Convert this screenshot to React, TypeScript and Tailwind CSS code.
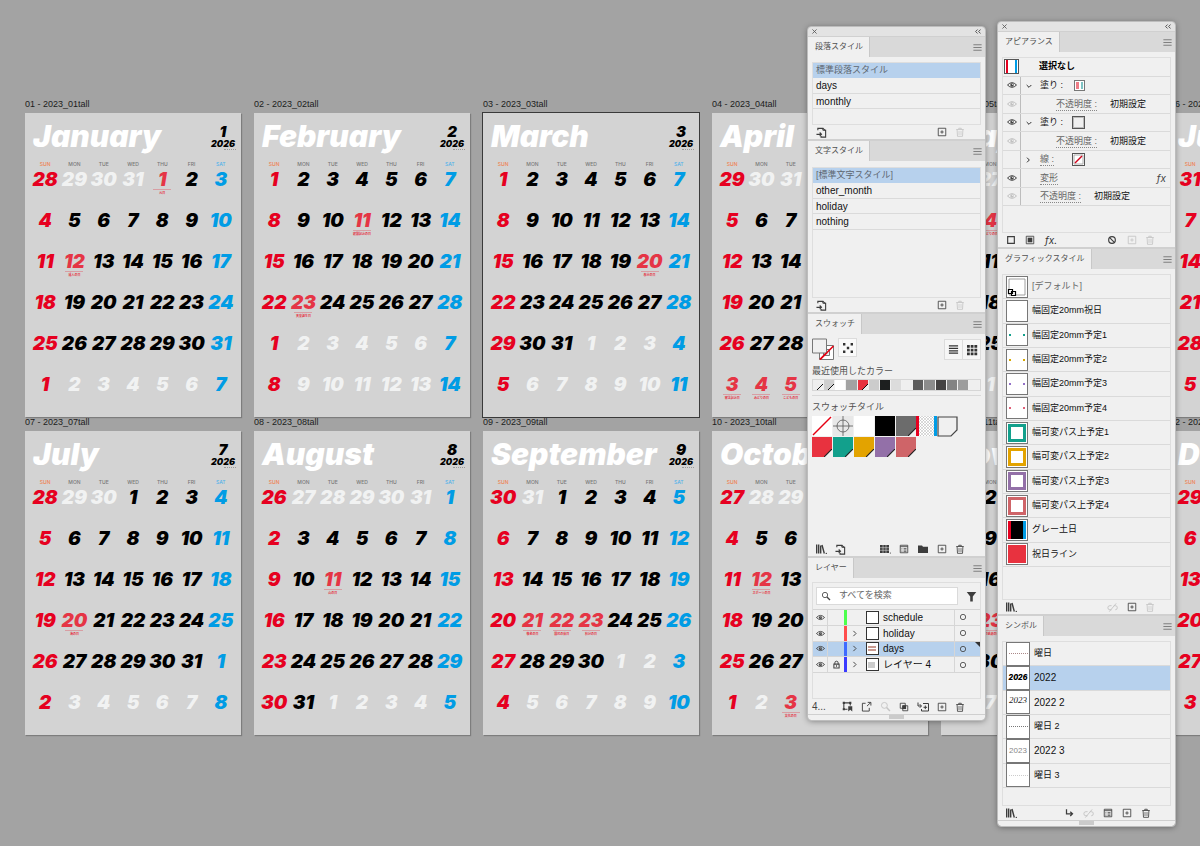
import React, { useState } from 'react';
import clsx from 'clsx';

type Month = {
  no: number;
  name: string;
  lead: number; // day number printed in the first cell
  prevLast: number; // last day of the previous month, 0 when the month starts on Sunday
  days: number;
  holidays: Record<number, string>; // keyed by cell index
};

const MONTHS: Month[] = [
  { no: 1, name: 'January', lead: 28, prevLast: 31, days: 31, holidays: { 4: '元日', 15: '成人の日' } },
  { no: 2, name: 'February', lead: 1, prevLast: 0, days: 28, holidays: { 10: '建国記念の日', 22: '天皇誕生日' } },
  { no: 3, name: 'March', lead: 1, prevLast: 0, days: 31, holidays: { 19: '春分の日' } },
  { no: 4, name: 'April', lead: 29, prevLast: 31, days: 30, holidays: { 31: '昭和の日', 35: '憲法記念日', 36: 'みどりの日', 37: 'こどもの日' } },
  { no: 5, name: 'May', lead: 26, prevLast: 30, days: 31, holidays: { 7: '憲法記念日', 8: 'みどりの日', 9: 'こどもの日', 10: '振替休日' } },
  { no: 6, name: 'June', lead: 31, prevLast: 31, days: 30, holidays: {} },
  { no: 7, name: 'July', lead: 28, prevLast: 30, days: 31, holidays: { 22: '海の日' } },
  { no: 8, name: 'August', lead: 26, prevLast: 31, days: 31, holidays: { 16: '山の日' } },
  { no: 9, name: 'September', lead: 30, prevLast: 31, days: 30, holidays: { 22: '敬老の日', 23: '国民の休日', 24: '秋分の日' } },
  { no: 10, name: 'October', lead: 27, prevLast: 30, days: 31, holidays: { 15: 'スポーツの日', 37: '文化の日' } },
  { no: 11, name: 'November', lead: 1, prevLast: 0, days: 30, holidays: { 2: '文化の日', 22: '勤労感謝の日' } },
  { no: 12, name: 'December', lead: 29, prevLast: 30, days: 31, holidays: {} },
];

const WEEKDAYS = ['SUN', 'MON', 'TUE', 'WED', 'THU', 'FRI', 'SAT'];

const buildCells = (m: Month) => {
  const before = m.prevLast ? m.prevLast - m.lead + 1 : 0;
  return Array.from({ length: 42 }, (_, i) => {
    if (i < before) return { day: m.lead + i, other: true };
    const day = i - before + 1;
    if (day <= m.days) return { day, other: false };
    return { day: day - m.days, other: true };
  });
};

const dayColor = (i: number, other: boolean, holiday: boolean) => {
  if (i % 7 === 0 && !holiday) return 'text-[#e60020]';
  if (i % 7 === 6) return 'text-[#009ce5]';
  if (holiday) return 'text-[#e53545]';
  if (other) return 'text-[#f1f2f2]';
  return 'text-black';
};

const Sheet = ({ month }: { month: Month }) => {
  const id = String(month.no).padStart(2, '0');
  return (
    <section className="flex flex-col">
      <p className="h-[14px] text-[9px] leading-[10px] text-[#1c1c1c] whitespace-nowrap">{`${id} - 2023_${id}tall`}</p>
      <div
        className={clsx(
          'h-[304px] bg-[#d3d3d3] flex flex-col font-[Inter,sans-serif] italic overflow-hidden',
          month.no === 3 ? 'outline outline-[#3a3a3a]' : 'shadow-[1px_1px_1px_#7d7d7d]'
        )}
      >
        <div className="flex justify-between h-[47px] pl-2 pr-[5px]">
          <h2 className="pt-1 text-[30px] leading-[38px] font-black text-white">{month.name}</h2>
          <div className="flex flex-col items-center w-[26px] pt-[11px] font-black text-black">
            <span className="text-[15px] leading-[15px]">{month.no}</span>
            <span className="text-[9px] leading-[10px]">2026</span>
            <span className="w-[12px] self-end border-t border-dotted border-[#999] h-0" />
          </div>
        </div>
        <table className="mx-auto w-[205px] table-fixed border-collapse text-center">
          <thead>
            <tr className="h-[10px]">
              {WEEKDAYS.map((w, i) => (
                <th
                  key={w}
                  className={clsx(
                    'p-0 align-top text-[5px] leading-[8px] font-medium not-italic',
                    i === 0 ? 'text-[#f08050]' : i === 6 ? 'text-[#4fb2ea]' : 'text-[#777]'
                  )}
                >
                  {w}
                </th>
              ))}
            </tr>
          </thead>
          <tbody>
            {[0, 1, 2, 3, 4, 5].map(week => (
              <tr key={week} className="h-[41px]">
                {buildCells(month).slice(week * 7, week * 7 + 7).map((c, col) => {
                  const i = week * 7 + col;
                  const holiday = month.holidays[i];
                  return (
                    <td key={col} className={clsx('p-0 align-top', dayColor(i, c.other, !!holiday))}>
                      <div className="h-[19px] text-[19px] leading-[20px] font-black">{c.day}</div>
                      {holiday && (
                        <div className="mx-auto w-[18px] border-t border-[#e5354555] text-[3px] leading-[6px] not-italic font-bold whitespace-nowrap font-['Noto_Sans_CJK_JP',sans-serif]">
                          {holiday}
                        </div>
                      )}
                    </td>
                  );
                })}
              </tr>
            ))}
          </tbody>
        </table>
      </div>
    </section>
  );
};

/* ---------- icons ---------- */

const ICONS: Record<string, React.ReactNode> = {
  menu: <path d="M1.5 3h9M1.5 6h9M1.5 9h9" stroke="#777" />,
  plus: <path d="M1.5 1.5h9v9h-9zM6 4v4M4 6h4" />,
  trash: (
    <>
      <path d="M1.5 3h9M4.5 3V1.5h3V3M2.5 3.2l.5 8h6l.5-8" />
      <path d="M4.8 4.8v4.8M7.2 4.8v4.8" strokeWidth={0.8} />
    </>
  ),
  load: (
    <>
      <path d="M2 3.5V1.5h5.5v2M7.5 3.5h3v7.5H5.5V9.8" strokeWidth={1.2} />
      <path d="M7.5 1.5l3 2.5M.5 8h5.2M4 6l2 2-2 2" strokeWidth={1.2} />
    </>
  ),
  library: (
    <>
      <path d="M1.7 1.5v9M3.7 1.5v9M5.7 2.5v8M7 2l2.3 8.5" strokeWidth={1.4} />
      <circle cx="11.3" cy="10.4" r=".7" fill="currentColor" stroke="none" />
    </>
  ),
  kinds: (
    <>
      <rect x="1" y="2" width="9" height="8" fill="currentColor" stroke="none" />
      <path d="M1 4.7h9M1 7.3h9M4 2v8M7 2v8" stroke="#f0f0f0" strokeWidth={0.5} />
      <circle cx="11.4" cy="10" r=".6" fill="currentColor" stroke="none" />
    </>
  ),
  options: (
    <>
      <path d="M1.5 1.5h9v9h-9zM1.5 3.2h9" />
      <path d="M3 5.5h1M3 7.2h1M3 8.9h1M5.5 5.5H9M5.5 7.2H9M5.5 8.9H9" strokeWidth={0.9} />
    </>
  ),
  folder: <path d="M1 2.5h4l1 1.2h5V10H1z" fill="currentColor" stroke="none" />,
  unlink: <path d="M5 8.5H3.2a2 2 0 010-4.5H5M7.5 4H9a2 2 0 010 4.5M2.5 10.5l7.5-9" />,
  place: <path d="M3 1.5V7h7M7.5 4.5L10.2 7 7.5 9.5" strokeWidth={1.5} />,
  square: <path d="M2 2h8v8H2z" strokeWidth={1.4} />,
  filled: (
    <>
      <path d="M1.5 1.5h9v9h-9z" />
      <path d="M3.2 3.2h5.6v5.6H3.2z" fill="currentColor" stroke="none" />
    </>
  ),
  ban: (
    <>
      <circle cx="6" cy="6" r="4" strokeWidth={1.4} />
      <path d="M3.2 3.2l5.6 5.6" strokeWidth={1.4} />
    </>
  ),
  search: (
    <>
      <circle cx="4.8" cy="4.8" r="3.2" />
      <path d="M7.2 7.2l3.6 3.6" strokeWidth={1.6} />
    </>
  ),
  funnel: <path d="M.8 1h10.4L7.4 6v5.5H4.6V6z" fill="currentColor" stroke="none" />,
  collect: (
    <>
      <path d="M2 2h7M2 2v7h4M9 2v3" strokeWidth={1.2} />
      <path d="M.8.8h2.4v2.4H.8zM7.8.8h2.4v2.4H7.8zM.8 7.8h2.4v2.4H.8z" fill="currentColor" stroke="none" />
      <path d="M6.8 11.5V5.8h4.4v5.7L9 9.6z" fill="currentColor" stroke="none" />
    </>
  ),
  exportIcon: <path d="M5 2.5H1.5v8.5H9V7.5M7.3 1.5h3.5V5M10.5 1.8L6.5 5.6" />,
  mask: (
    <>
      <path d="M1.5 1.5h6v6h-6zM4.5 4.5h6v6h-6z" />
      <path d="M4 4h4.5v4.5H4z" fill="currentColor" stroke="none" />
    </>
  ),
  sublayer: <path d="M1 1.5V5h3M2.8 3.2L4.5 5 2.8 6.8M6 2.5h5.5v7.5H4.5V8M8.3 4.5v3.6M6.5 6.3h3.6" />,
  eye: (
    <>
      <path d="M.6 6Q6 .4 11.4 6 6 11.6.6 6z" strokeWidth={1.2} />
      <circle cx="6" cy="6" r="2.1" fill="currentColor" stroke="none" />
      <circle cx="6.5" cy="5.4" r=".7" fill="#f0f0f0" stroke="none" />
    </>
  ),
  lock: (
    <>
      <path d="M3.8 5.5V3.8a2.2 2.2 0 014.4 0v1.7" strokeWidth={1.3} />
      <path d="M2.5 5.5h7v5.2h-7zM6 7v2" strokeWidth={1.4} />
    </>
  ),
  right: <path d="M4.5 2.5L8 6 4.5 9.5" strokeWidth={1.3} />,
  down: <path d="M2.5 4.5L6 8l3.5-3.5" strokeWidth={1.3} />,
  circle: <circle cx="6" cy="6" r="3.2" />,
  random: (
    <path d="M1 1h2.4v2.4H1zM8.6 1H11v2.4H8.6zM4.8 4.8h2.4v2.4H4.8zM1 8.6h2.4V11H1zM8.6 8.6H11V11H8.6z" fill="currentColor" stroke="none" />
  ),
  listView: <path d="M1 2h10M1 4.7h10M1 7.4h10M1 10h10" strokeWidth={1.3} />,
  gridView: (
    <path d="M1 1h2.8v2.8H1zM4.7 1h2.8v2.8H4.7zM8.4 1h2.8v2.8H8.4zM1 4.7h2.8v2.8H1zM4.7 4.7h2.8v2.8H4.7zM8.4 4.7h2.8v2.8H8.4zM1 8.4h2.8v2.8H1zM4.7 8.4h2.8v2.8H4.7zM8.4 8.4h2.8v2.8H8.4z" fill="currentColor" stroke="none" />
  ),
};

const Icon = ({ name, className }: { name: string; className?: string }) => (
  <svg viewBox="0 0 12 12" fill="none" stroke="currentColor" strokeWidth={1} className={clsx('shrink-0', className || 'size-[10px]')} aria-hidden="true">
    {ICONS[name]}
  </svg>
);

const IconButton = ({ name, label, dim, className }: { name: string; label: string; dim?: boolean; className?: string }) => (
  <button aria-label={label} disabled={dim} className={clsx('flex items-center justify-center shrink-0', dim ? 'text-[#c4c4c4]' : 'text-[#3d3d3d]')}>
    <Icon name={name} className={className} />
  </button>
);

/* ---------- panel chrome ---------- */

const FloatingWindow = ({ className, children }: { className: string; children: React.ReactNode }) => (
  <div className={clsx('absolute w-[177px] rounded-[3px] bg-[#f0f0f0] outline outline-[#bdbdbd] shadow-[0_1px_6px_rgba(0,0,0,0.45)]', className)}>
    <div className="flex items-center justify-between h-[10px] px-1 bg-[#e3e3e3] rounded-t-[3px] border-b border-[#d0d0d0]">
      <button aria-label="閉じる" className="text-[#555]">
        <svg viewBox="0 0 6 6" className="size-[5px]" stroke="currentColor" strokeWidth={1}><path d="M.5.5l5 5M5.5.5l-5 5" /></svg>
      </button>
      <button aria-label="折りたたむ" className="text-[#444]">
        <svg viewBox="0 0 6 5" className="w-[6px] h-[5px]" fill="none" stroke="currentColor" strokeWidth={0.9}><path d="M2.6.5l-2 2 2 2M5.6.5l-2 2 2 2" /></svg>
      </button>
    </div>
    {children}
  </div>
);

const Panel = ({ title, children, last }: { title: string; children: React.ReactNode; last?: boolean }) => (
  <section className={clsx(!last && 'border-b-2 border-[#d0d0d0]')}>
    <div className="flex items-center justify-between h-[20px] bg-[#d9d9d9] pr-[2px]">
      <button className="h-full pl-[7px] pr-[6px] bg-[#f0f0f0] border-r border-[#c8c8c8] text-[8px] leading-[20px] text-[#505050] whitespace-nowrap">{title}</button>
      <button aria-label={`${title}メニュー`}><Icon name="menu" className="size-[11px]" /></button>
    </div>
    <div className="px-1">{children}</div>
  </section>
);

const Grip = () => (
  <div className="flex justify-center h-[6px] border-t border-[#cfcfcf]">
    <span className="w-[15px] h-[4px] bg-[#cbcbcb]" />
  </div>
);

const StyleList = ({ items, className }: { items: string[]; className: string }) => {
  const [selected, setSelected] = useState(items[0]);
  return (
    <ul className={clsx('border border-[#dedede]', className)}>
      {items.map((item, i) => (
        <li key={item}>
          <button
            onClick={() => setSelected(item)}
            className={clsx(
              'flex items-center w-full px-[3px] border-b text-left',
              selected === item ? 'bg-[#b7d1ed] border-[#b7d1ed]' : 'border-[#dadada]',
              i % 2 === 0 ? 'h-[15px]' : 'h-[16px]',
              i === 0 ? 'pt-[2px] text-[9px] text-[#5d6670]' : 'text-[10px] text-[#111]'
            )}
          >
            {item}
          </button>
        </li>
      ))}
    </ul>
  );
};

const StyleFooter = () => (
  <div className="flex items-center h-[14px] pl-1 pr-4">
    <IconButton name="load" label="読み込み" className="size-[11px]" />
    <div className="flex gap-2 ml-auto">
      <IconButton name="plus" label="新規" />
      <IconButton name="trash" label="削除" dim />
    </div>
  </div>
);

/* ---------- swatches ---------- */

const RECENT = [
  'bg-[#eeeeee]', 'bg-[#cfcfcf]', 'bg-white', 'bg-[#a3a3a3]', 'bg-[#e8323f]', 'bg-[#cccccc]', 'bg-[#1d1f1f]', 'bg-[#dcdcdc]',
  'bg-[#efefef]', 'bg-[#5d5d5d]', 'bg-[#8c8c8c]', 'bg-[#444242]', 'bg-[#838383]', 'bg-[#9c9c9c]', 'bg-[#efefef]',
];

const Corner = () => (
  <svg viewBox="0 0 8 8" className="size-[8px]"><path d="M0 8L8 0V8z" fill="#f0f0f0" /><path d="M0 8L8 0" stroke="#222" strokeWidth={1.2} /></svg>
);

const SPOT_TILES = ['bg-[#e8323f]', 'bg-[#12a08c]', 'bg-[#e3a300]', 'bg-[#9370a8]', 'bg-[#cf6468]'];

const Swatches = () => (
  <div className="h-[208px] pt-1">
    <div className="flex items-center h-[23px]">
      <svg viewBox="0 0 23 23" className="size-[23px]" aria-hidden="true">
        <path d="M7.5 7.5h14v14h-14z" fill="#fff" stroke="#777" />
        <path d="M11.5 11.5h6v6h-6z" fill="#f0f0f0" stroke="#777" />
        <path d="M8 21.5L21.5 8" stroke="#e60012" strokeWidth={1.6} />
        <path d="M.5 1h14v14H.5z" fill="#f0f0f0" stroke="#777" />
        <path d="M8 21.5L15 14.5" stroke="#e60012" strokeWidth={1.6} />
      </svg>
      <button aria-label="カラーテーマ" className="flex items-center justify-center ml-[3px] size-[19px] mb-1 bg-[#fafafa] border border-[#dcdcdc] text-[#333]"><Icon name="random" className="size-[12px]" /></button>
      <div className="flex ml-auto bg-[#f6f6f6] border border-[#dcdcdc] text-[#333]">
        <button aria-label="リスト表示" className="flex items-center justify-center w-[18px] h-[19px] border-r border-[#dcdcdc]"><Icon name="listView" className="size-[11px]" /></button>
        <button aria-label="サムネール表示" className="flex items-center justify-center w-[17px] h-[19px]"><Icon name="gridView" className="size-[12px]" /></button>
      </div>
    </div>
    <h3 className="pt-1 text-[9px] leading-[13px] text-[#505050]">最近使用したカラー</h3>
    <div className="flex mt-[1px] h-[12px] border border-[#d6d6d6]">
      {RECENT.map((color, i) => (
        <button key={i} aria-label={`最近 ${i + 1}`} className={clsx('flex items-end justify-end flex-1 h-full border-r border-[#f0f0f0]', color)}>
          {(i < 2 || i === 4) && <svg viewBox="0 0 6 6" className="size-[6px]"><path d="M0 6L6 0V6z" fill="#f0f0f0" /><path d="M0 6L6 0" stroke="#111" /></svg>}
        </button>
      ))}
    </div>
    <h3 className="mt-1 border-t border-[#d9d9d9] pt-[5px] text-[9px] leading-[13px] text-[#505050]">スウォッチタイル</h3>
    <div className="flex mt-[2px] h-[21px]">
      <button aria-label="なし" className="size-[20px] mr-[1px] bg-white"><svg viewBox="0 0 20 20"><path d="M1 19L19 1" stroke="#e60012" strokeWidth={1.4} /></svg></button>
      <button aria-label="レジストレーション" className="size-[20px] mr-[1px] bg-[#e8e8e8]"><svg viewBox="0 0 20 20" fill="none" stroke="#555" strokeWidth={0.8}><circle cx="10" cy="10" r="6" /><path d="M10 0v20M0 10h20" /></svg></button>
      <button aria-label="ホワイト" className="size-[20px] mr-[1px] bg-white" />
      <button aria-label="ブラック" className="size-[20px] mr-[1px] bg-black" />
      <button aria-label="グレー" className="flex items-end justify-end size-[20px] bg-[#6c6c6c]"><Corner /></button>
      <button aria-label="パターン" className="w-[21px] h-[20px] border-l-3 border-r-3 border-l-[#e60020] border-r-[#009ce5]">
        <svg viewBox="0 0 15 20" className="w-full h-full">
          <defs><pattern id="weave" width="3" height="3" patternUnits="userSpaceOnUse"><rect width="3" height="3" fill="#fff" /><path d="M0 0l3 3M3 0L0 3" stroke="#b5b5b5" strokeWidth=".5" /></pattern></defs>
          <rect width="15" height="20" fill="url(#weave)" />
        </svg>
      </button>
      <button aria-label="薄いグレー" className="size-[21px]"><svg viewBox="0 0 21 21"><path d="M1 1h19v13l-6 6H1z" fill="#f0f0f0" stroke="#444" strokeWidth={1.2} /></svg></button>
    </div>
    <div className="flex gap-[1px]">
      {SPOT_TILES.map((color, i) => (
        <button key={color} aria-label={`スポット ${i + 1}`} className={clsx('flex items-end justify-end size-[20px]', color)}><Corner /></button>
      ))}
    </div>
  </div>
);

/* ---------- layers ---------- */

const LAYERS = [
  { name: 'schedule', color: 'bg-[#4dff4d]', locked: false, open: false },
  { name: 'holiday', color: 'bg-[#ff4d4d]', locked: false, open: true },
  { name: 'days', color: 'bg-[#3f6bff]', locked: false, open: true },
  { name: 'レイヤー 4', color: 'bg-[#3a3aff]', locked: true, open: true },
];

const Layers = () => {
  const [query, setQuery] = useState('');
  const [active, setActive] = useState('days');
  return (
    <>
      <div className="mt-1 h-[117px] border border-[#dedede]">
        <div className="flex items-center gap-2 h-[26px] pl-[3px] pr-[3px]">
          <label className="flex items-center gap-[8px] flex-1 min-w-0 h-[18px] pl-1 bg-white border border-[#dadada] text-[#444]">
            <Icon name="search" />
            <input
              value={query}
              onChange={e => setQuery(e.target.value)}
              placeholder="すべてを検索"
              aria-label="すべてを検索"
              className="w-full min-w-0 text-[9px] outline-none placeholder:text-[#666]"
            />
          </label>
          <IconButton name="funnel" label="フィルター" className="size-[11px]" />
        </div>
        <ul className="border-t border-[#d4d4d4] h-[64px] grid auto-rows-fr">
          {LAYERS.map(layer => (
            <li key={layer.name} className={clsx('flex items-stretch border-b border-[#d6d6d6] text-[#444]', active === layer.name && 'bg-[#b7d1ed]')}>
              <button aria-label={`${layer.name} 表示`} className="flex items-center justify-center w-[15px] border-r border-[#d6d6d6]"><Icon name="eye" className="size-[9px]" /></button>
              <button aria-label={`${layer.name} ロック`} className="flex items-center justify-center w-[16px]">{layer.locked && <Icon name="lock" className="size-[9px]" />}</button>
              <span className={clsx('w-[3px]', layer.color)} />
              <button aria-label={`${layer.name} 展開`} className="flex items-center justify-center w-[14px]">{layer.open && <Icon name="right" className="size-[9px]" />}</button>
              <button onClick={() => setActive(layer.name)} className="flex items-center gap-1 flex-1 pl-[5px] text-[10px] text-[#111]">
                <span className="flex items-center size-[13px] bg-white border border-[#333] p-[1px]">
                  {layer.name === 'days' && <span className="w-2 h-[5px] border-y-2 border-[#c99a90]" />}
                  {layer.name === 'レイヤー 4' && <span className="w-[7px] h-[6px] bg-[#cccccc]" />}
                </span>
                {layer.name}
              </button>
              <button aria-label={`${layer.name} ターゲット`} className="flex items-center w-[26px] pl-[3px] border-l border-[#d6d6d6]">
                <Icon name="circle" />
                {active === layer.name && <svg viewBox="0 0 5 5" className="size-[5px] ml-auto self-start"><path d="M0 0h5v5z" fill="#333" /></svg>}
              </button>
            </li>
          ))}
        </ul>
      </div>
      <div className="flex items-center h-[15px] pr-4">
        <span className="text-[10px] text-[#444]">4...</span>
        <div className="flex gap-[8px] ml-auto">
          <IconButton name="collect" label="書き出し用に追加" className="size-[11px]" />
          <IconButton name="exportIcon" label="書き出し" className="size-[11px]" />
          <IconButton name="search" label="検索" dim className="size-[11px]" />
          <IconButton name="mask" label="マスク" />
          <IconButton name="sublayer" label="サブレイヤー" className="size-[12px]" />
          <IconButton name="plus" label="新規レイヤー" />
          <IconButton name="trash" label="レイヤーを削除" />
        </div>
      </div>
    </>
  );
};

/* ---------- appearance ---------- */

const AppearanceRow = ({ eye, children }: { eye: 'on' | 'off' | 'none'; children: React.ReactNode }) => (
  <div className="flex items-stretch border-b border-[#dadada] text-[9px] text-[#111]">
    <button aria-label="表示" className={clsx('flex items-center justify-center w-[18px] border-r border-[#bdbdbd]', eye === 'on' ? 'text-[#444]' : 'text-[#c0c0c0]')}>
      {eye !== 'none' && <Icon name="eye" />}
    </button>
    <div className="flex items-center flex-1 pt-[1px]">{children}</div>
  </div>
);

const OptionLink = ({ children }: { children: React.ReactNode }) => (
  <button className="text-[#666] leading-[12px] border-b border-dotted border-[#888]">{children}</button>
);

const Appearance = () => (
  <>
    <div className="mt-[5px] h-[176px] border border-[#dedede]">
      <div className="h-[148px] grid auto-rows-fr">
        <div className="flex items-center border-b border-[#dadada] text-[9px] font-bold text-black">
          <span className="flex justify-between w-[15px] h-[15px] ml-[1px] mr-[20px] px-[1px] bg-white border border-[#555]">
            <span className="w-[2px] bg-[#e60020]" /><span className="w-[2px] bg-[#009ce5]" />
          </span>
          選択なし
        </div>
        <AppearanceRow eye="on">
          <Icon name="down" className="size-[8px] ml-1 mr-[7px]" /><button>塗り :</button>
          <span className="flex justify-between size-[11px] ml-[11px] p-[1px] bg-white border border-[#777]"><span className="w-[3px] bg-[#ee7c86]" /><span className="w-[2px] bg-[#7fc4c4]" /></span>
        </AppearanceRow>
        <AppearanceRow eye="off">
          <span className="ml-[35px]"><OptionLink>不透明度 :</OptionLink></span><span className="ml-[13px]">初期設定</span>
        </AppearanceRow>
        <AppearanceRow eye="on">
          <Icon name="down" className="size-[8px] ml-1 mr-[7px]" /><button>塗り :</button>
          <span className="size-[13px] ml-[9px] bg-[#f0f0f0] border border-[#555] outline outline-[#bbb] -outline-offset-2" />
        </AppearanceRow>
        <AppearanceRow eye="off">
          <span className="ml-[35px]"><OptionLink>不透明度 :</OptionLink></span><span className="ml-[13px]">初期設定</span>
        </AppearanceRow>
        <AppearanceRow eye="none">
          <Icon name="right" className="size-[8px] ml-[3px] mr-2" /><OptionLink>線 :</OptionLink>
          <span className="size-[13px] ml-[18px] bg-white border border-[#555]"><svg viewBox="0 0 11 11"><path d="M1 1h9v9H1z" fill="none" stroke="#999" strokeWidth={0.8} /><path d="M2 9L9 2" stroke="#d0021b" strokeWidth={1.5} /></svg></span>
        </AppearanceRow>
        <AppearanceRow eye="on">
          <span className="ml-[19px]"><OptionLink>変形</OptionLink></span>
          <button className="ml-auto mr-1 font-[Inter,sans-serif] italic text-[10px] text-[#444]">fx</button>
        </AppearanceRow>
        <AppearanceRow eye="off">
          <span className="ml-[19px]"><OptionLink>不透明度 :</OptionLink></span><span className="ml-[13px]">初期設定</span>
        </AppearanceRow>
      </div>
    </div>
    <div className="flex items-center h-[14px] pl-1 pr-4">
      <IconButton name="square" label="新規線" />
      <span className="ml-[9px] flex"><IconButton name="filled" label="新規塗り" /></span>
      <button className="ml-[10px] font-[Inter,sans-serif] italic text-[10px] text-[#333]">fx.</button>
      <div className="flex gap-2 ml-auto">
        <span className="flex mr-[2px]"><IconButton name="ban" label="消去" /></span>
        <IconButton name="plus" label="複製" dim />
        <IconButton name="trash" label="削除" dim />
      </div>
    </div>
  </>
);

/* ---------- graphic styles / symbols ---------- */

const Dots = ({ color }: { color: string }) => (
  <span className="flex items-center justify-between w-full px-[2px]"><span className={clsx('size-[2px]', color)} /><span className={clsx('size-[2px]', color)} /></span>
);
const Frame = ({ color }: { color: string }) => <span className={clsx('size-[18px] border-[3px] bg-white', color)} />;

const GRAPHIC_STYLES: { name: string; thumb: React.ReactNode }[] = [
  {
    name: '[デフォルト]',
    thumb: (
      <svg viewBox="0 0 20 20" className="size-[20px]" fill="none" stroke="#888" strokeWidth={0.8}>
        <path d="M2 2h16v16H2z" />
        <path d="M4.5 14.5h4v4h-4zM1.5 12.5h4v4h-4z" fill="#fff" stroke="#000" strokeWidth={1.2} />
      </svg>
    ),
  },
  { name: '幅固定20mm祝日', thumb: null },
  { name: '幅固定20mm予定1', thumb: <Dots color="bg-[#12a08c]" /> },
  { name: '幅固定20mm予定2', thumb: <Dots color="bg-[#d8a800]" /> },
  { name: '幅固定20mm予定3', thumb: <Dots color="bg-[#9370c8]" /> },
  { name: '幅固定20mm予定4', thumb: <Dots color="bg-[#e06078]" /> },
  { name: '幅可変パス上予定1', thumb: <Frame color="border-[#12a08c]" /> },
  { name: '幅可変パス上予定2', thumb: <Frame color="border-[#e3a300]" /> },
  { name: '幅可変パス上予定3', thumb: <Frame color="border-[#9370a8]" /> },
  { name: '幅可変パス上予定4', thumb: <Frame color="border-[#cf6468]" /> },
  { name: 'グレー土日', thumb: <span className="size-[18px] bg-black border-l-3 border-r-3 border-l-[#e60020] border-r-[#009ce5]" /> },
  { name: '祝日ライン', thumb: <span className="size-[18px] bg-[#e8323f]" /> },
];

const GraphicStyles = () => (
  <>
    <div className="mt-[5px] h-[326px] border border-[#dedede]">
      <ul className="h-[292px] grid auto-rows-fr">
        {GRAPHIC_STYLES.map((s, i) => (
          <li key={s.name} className="flex border-b border-[#dadada]">
            <button className={clsx('flex items-center gap-1 w-full pl-[3px] text-[9px] text-left', i === 0 ? 'text-[#666]' : 'text-[#111]')}>
              <span className="flex items-center justify-center size-[22px] bg-white border border-[#777]">{s.thumb}</span>
              {s.name}
            </button>
          </li>
        ))}
      </ul>
    </div>
    <div className="flex items-center h-[14px] pl-[3px] pr-4">
      <IconButton name="library" label="ライブラリ" className="size-[12px]" />
      <div className="flex gap-2 ml-auto">
        <span className="flex mr-[1px]"><IconButton name="unlink" label="リンクを解除" dim className="size-[11px]" /></span>
        <IconButton name="plus" label="新規" />
        <IconButton name="trash" label="削除" dim />
      </div>
    </div>
  </>
);

const SYMBOLS: { name: string; thumb: React.ReactNode }[] = [
  { name: '曜日', thumb: <span className="w-[19px] border-t border-dotted border-[#a88]" /> },
  { name: '2022', thumb: <span className="font-[Inter,sans-serif] text-[7px] font-black italic text-black">2026</span> },
  { name: '2022 2', thumb: <span className="font-['Liberation_Serif',serif] text-[9px] italic text-[#222] mb-1">2023</span> },
  { name: '曜日 2', thumb: <span className="w-[19px] border-t border-dotted border-[#777]" /> },
  { name: '2022 3', thumb: <span className="text-[8px] text-[#888]">2023</span> },
  { name: '曜日 3', thumb: <span className="w-[19px] border-t border-dotted border-[#ccc]" /> },
];

const Symbols = () => {
  const [selected, setSelected] = useState('2022');
  return (
    <>
      <div className="mt-[5px] h-[165px] border border-[#dedede]">
        <ul className="h-[146px] grid auto-rows-fr">
          {SYMBOLS.map(s => (
            <li key={s.name} className={clsx('flex border-b border-[#dadada]', selected === s.name && 'bg-[#b7d1ed]')}>
              <button onClick={() => setSelected(s.name)} className={clsx('flex items-center gap-1 w-full pl-[3px] text-left text-[#111]', s.name.startsWith('2') ? 'text-[10px]' : 'text-[9px]')}>
                <span className="flex items-center justify-center size-[24px] bg-white border border-[#777]">{s.thumb}</span>
                {s.name}
              </button>
            </li>
          ))}
        </ul>
      </div>
      <div className="flex items-center h-[14px] pl-[3px] pr-5">
        <IconButton name="library" label="ライブラリ" className="size-[12px]" />
        <div className="flex gap-[9px] ml-auto">
          <IconButton name="place" label="配置" />
          <IconButton name="unlink" label="リンクを解除" dim className="size-[11px]" />
          <IconButton name="options" label="オプション" />
          <IconButton name="plus" label="新規シンボル" />
          <IconButton name="trash" label="シンボルを削除" />
        </div>
      </div>
    </>
  );
};

export default function App() {
  return (
    <div className="relative min-h-screen overflow-hidden bg-[#a3a3a3] font-['Liberation_Sans','Noto_Sans_CJK_JP',sans-serif]">
      <main className="grid grid-cols-[repeat(6,216px)] gap-x-[13px] pt-[99px] pl-[25px] pb-[100px]">
        {MONTHS.map(m => <Sheet key={m.no} month={m} />)}
      </main>

      <FloatingWindow className="left-[808px] top-[27px]">
        <Panel title="段落スタイル">
          <StyleList items={['標準段落スタイル', 'days', 'monthly']} className="mt-[5px] h-[63px]" />
          <StyleFooter />
        </Panel>
        <Panel title="文字スタイル">
          <StyleList items={['[標準文字スタイル]', 'other_month', 'holiday', 'nothing']} className="mt-[6px] h-[131px]" />
          <StyleFooter />
        </Panel>
        <Panel title="スウォッチ">
          <Swatches />
          <div className="flex items-center h-[14px] pl-[3px] pr-4">
            <IconButton name="library" label="ライブラリ" className="size-[12px]" />
            <span className="flex ml-2"><IconButton name="load" label="追加" className="size-[11px]" /></span>
            <div className="flex gap-2 ml-auto">
              <IconButton name="kinds" label="種類" className="size-[12px]" />
              <IconButton name="options" label="オプション" />
              <IconButton name="folder" label="グループ" className="size-[12px]" />
              <IconButton name="plus" label="新規" />
              <IconButton name="trash" label="削除" />
            </div>
          </div>
        </Panel>
        <Panel title="レイヤー" last>
          <Layers />
        </Panel>
        <Grip />
      </FloatingWindow>

      <FloatingWindow className="left-[998px] top-[22px]">
        <Panel title="アピアランス"><Appearance /></Panel>
        <Panel title="グラフィックスタイル"><GraphicStyles /></Panel>
        <Panel title="シンボル" last><Symbols /></Panel>
        <Grip />
      </FloatingWindow>
    </div>
  );
}
